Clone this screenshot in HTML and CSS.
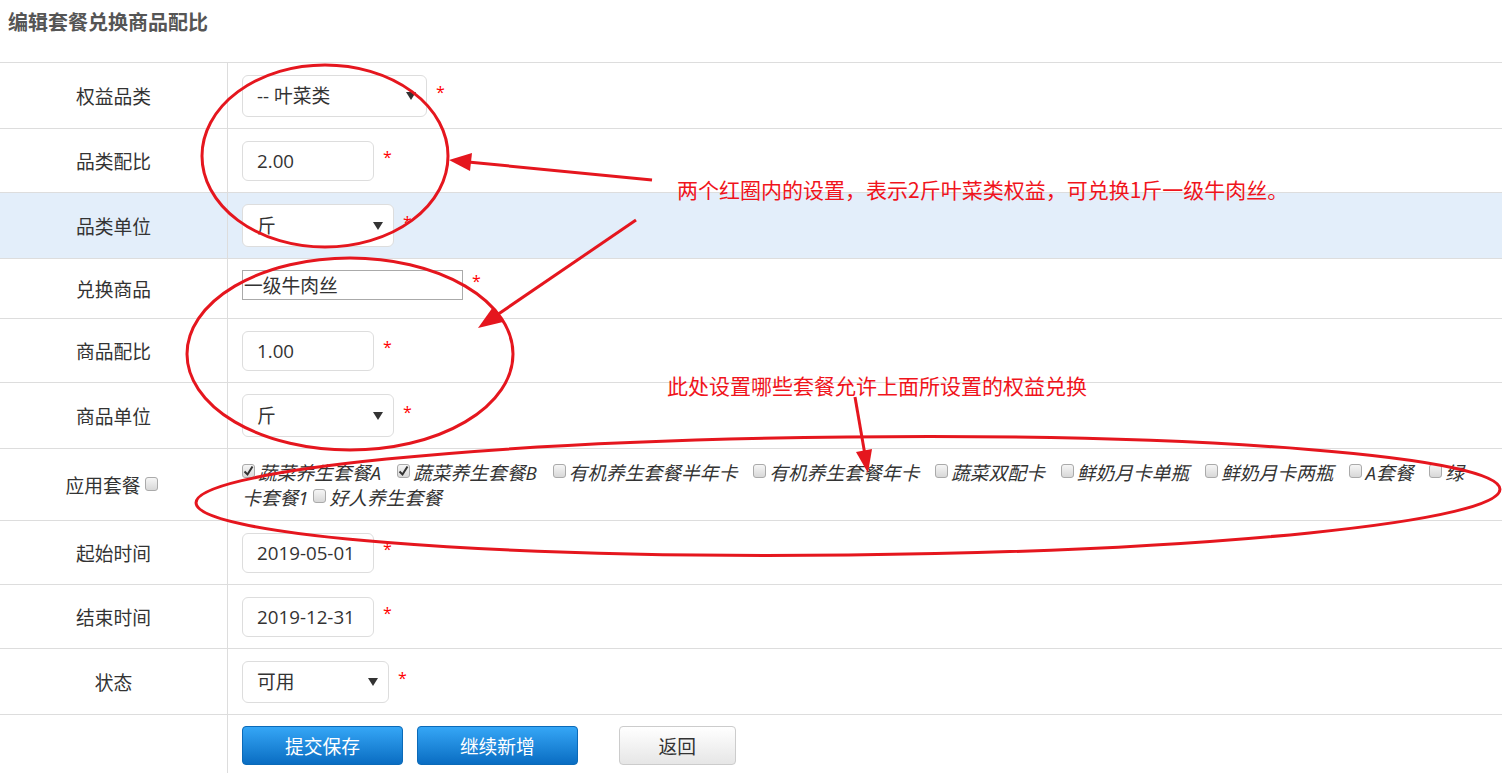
FILE: index.html
```html
<!DOCTYPE html>
<html>
<head>
    <title>编辑套餐兑换商品配比</title>
    <link rel="stylesheet" href="styles.css">
</head>
<body>
<div class="page">
    <h2 class="page-title">编辑套餐兑换商品配比</h2>

    <table class="edit-table">
        <tr class="row-66">
            <th>权益品类</th>
            <td><select class="sel sel-cat"><option>-- 叶菜类</option></select><span class="req">*</span></td>
        </tr>
        <tr class="row-64">
            <th>品类配比</th>
            <td><input class="inp" type="text" value="2.00"><span class="req">*</span></td>
        </tr>
        <tr class="row-66 row-active">
            <th>品类单位</th>
            <td><select class="sel sel-unit"><option>斤</option></select><span class="req">*</span></td>
        </tr>
        <tr class="row-60 row-goods">
            <th>兑换商品</th>
            <td><input class="inp-goods" type="text" value="一级牛肉丝"><span class="req">*</span></td>
        </tr>
        <tr class="row-64">
            <th>商品配比</th>
            <td><input class="inp" type="text" value="1.00"><span class="req">*</span></td>
        </tr>
        <tr class="row-66">
            <th>商品单位</th>
            <td><select class="sel sel-unit"><option>斤</option></select><span class="req">*</span></td>
        </tr>
        <tr class="row-72">
            <th>应用套餐 <input type="checkbox" class="chk"></th>
            <td class="pkg-cell">
                <label><input type="checkbox" class="chk" checked>蔬菜养生套餐A</label>
                <label><input type="checkbox" class="chk" checked>蔬菜养生套餐B</label>
                <label><input type="checkbox" class="chk">有机养生套餐半年卡</label>
                <label><input type="checkbox" class="chk">有机养生套餐年卡</label>
                <label><input type="checkbox" class="chk">蔬菜双配卡</label>
                <label><input type="checkbox" class="chk">鲜奶月卡单瓶</label>
                <label><input type="checkbox" class="chk">鲜奶月卡两瓶</label>
                <label><input type="checkbox" class="chk">A套餐</label>
                <input type="checkbox" class="chk">绿卡套餐1
                <label><input type="checkbox" class="chk">好人养生套餐</label>
            </td>
        </tr>
        <tr class="row-64">
            <th>起始时间</th>
            <td><input class="inp" type="text" value="2019-05-01"><span class="req">*</span></td>
        </tr>
        <tr class="row-64">
            <th>结束时间</th>
            <td><input class="inp" type="text" value="2019-12-31"><span class="req">*</span></td>
        </tr>
        <tr class="row-66">
            <th>状态</th>
            <td><select class="sel sel-state"><option>可用</option></select><span class="req">*</span></td>
        </tr>
        <tr class="row-btn">
            <th></th>
            <td>
                <button class="btn btn-blue">提交保存</button>
                <button class="btn btn-blue">继续新增</button>
                <button class="btn btn-back">返回</button>
            </td>
        </tr>
    </table>

    <!-- red hand-drawn notes over the form -->
    <svg class="notes" width="1502" height="773" viewBox="0 0 1502 773">
        <g fill="none" stroke="#e5161e" stroke-width="3">
            <ellipse cx="325" cy="156" rx="123" ry="91"/>
            <ellipse cx="350" cy="354" rx="163" ry="96"/>
            <ellipse cx="848" cy="496" rx="652" ry="59" transform="rotate(-0.6 848 496)"/>
            <line x1="652" y1="180" x2="468" y2="162"/>
            <line x1="636" y1="220" x2="494" y2="317"/>
            <line x1="855" y1="397" x2="865" y2="455"/>
        </g>
        <g fill="#e5161e">
            <polygon points="449,160 472,153 470,171"/>
            <polygon points="478,328 503,322 493,307"/>
            <polygon points="868,473 872,449 856,452"/>
        </g>
        <text class="note-text" x="677" y="198">两个红圈内的设置，表示2斤叶菜类权益，可兑换1斤一级牛肉丝。</text>
        <text class="note-text" x="667" y="394">此处设置哪些套餐允许上面所设置的权益兑换</text>
    </svg>
</div>
</body>
</html>
```

FILE: styles.css
```css
body {
    margin: 0;
    font-family: 'Open Sans', 'Noto Sans CJK SC', sans-serif;
    font-size: 18.75px;
    color: #333;
    background: #fff;
}
.page {
    position: relative;
    width: 1502px;
    height: 773px;
    overflow: hidden;
}
.page-title {
    margin: 0;
    padding: 10px 8px 26px;
    height: 26px;
    line-height: 26px;
    font-size: 20px;
    font-weight: bold;
    color: #555;
}
.edit-table {
    width: 100%;
    border-collapse: collapse;
}
.edit-table tr {
    border-top: 1px solid #ddd;
}
.edit-table th {
    width: 227px;
    padding: 0;
    border-right: 1px solid #ddd;
    font-weight: normal;
    text-align: center;
    vertical-align: middle;
}
.edit-table td {
    padding: 0 0 0 14px;
    vertical-align: middle;
}
.row-60 td, .row-60 th { height: 59px; }
.row-64 td, .row-64 th { height: 63px; }
.row-66 td, .row-66 th { height: 65px; }
.row-72 td, .row-72 th { height: 71px; }
.row-btn td, .row-btn th { height: 70px; vertical-align: top; }
.row-goods td {
    padding-bottom: 8px;
    height: 51px;
}
.row-active {
    background-color: #e3eefa;
}
.sel {
    appearance: none;
    -webkit-appearance: none;
    box-sizing: border-box;
    height: 42px;
    padding: 0 30px 0 14px;
    border: 1px solid #ddd;
    border-radius: 6px;
    background: #fff url("data:image/svg+xml;utf8,<svg xmlns='http://www.w3.org/2000/svg' width='10' height='8'><path d='M0 0h10L5 8z' fill='%23333'/></svg>") no-repeat right 10px center;
    font: inherit;
    color: #333;
    vertical-align: middle;
}
.sel-cat { width: 185px; }
.sel-unit { width: 152px; height: 43px; }
.sel-state { width: 147px; }
.inp {
    box-sizing: border-box;
    width: 132px;
    height: 40px;
    padding: 0 14px;
    border: 1px solid #ddd;
    border-radius: 6px;
    font: inherit;
    color: #333;
    vertical-align: middle;
}
.inp-goods {
    box-sizing: border-box;
    width: 221px;
    height: 30px;
    padding: 0 1px;
    border: 1px solid #aaa;
    font: inherit;
    color: #333;
    vertical-align: middle;
}
.req {
    display: inline-block;
    margin-left: 9px;
    font-size: 16px;
    color: #f00;
    vertical-align: 3px;
}
.chk {
    appearance: none;
    -webkit-appearance: none;
    width: 13px;
    height: 14px;
    margin: 0 3px 0 0;
    border: 1px solid #aaa;
    border-radius: 3px;
    background: linear-gradient(#f6f6f6, #d8d8d8);
    vertical-align: 2px;
}
.chk:checked {
    background: url("data:image/svg+xml;utf8,<svg xmlns='http://www.w3.org/2000/svg' width='13' height='14'><path d='M2.5 7.5l3 3 5-8' fill='none' stroke='%23333' stroke-width='2'/></svg>") no-repeat center, linear-gradient(#f6f6f6, #d8d8d8);
}
.pkg-cell {
    padding-right: 24px !important;
    font-style: italic;
    line-height: 25px;
}
.pkg-cell label {
    margin-right: 11px;
}
.btn {
    box-sizing: border-box;
    height: 39px;
    margin-top: 11px;
    border-radius: 4px;
    font: inherit;
    cursor: pointer;
}
.btn-blue {
    width: 161px;
    margin-right: 9px;
    border: 1px solid #0b6ab8;
    background: linear-gradient(#35a6f6, #0a6dc2);
    color: #fff;
}
.btn-back {
    width: 117px;
    margin-left: 27px;
    border: 1px solid #ccc;
    background: linear-gradient(#fff, #e6e6e6);
    color: #333;
}
.notes {
    position: absolute;
    top: 0;
    left: 0;
    pointer-events: none;
}
.note-text {
    font-family: 'Noto Sans CJK SC', sans-serif;
    font-size: 21px;
    fill: #f0141c;
}
```
